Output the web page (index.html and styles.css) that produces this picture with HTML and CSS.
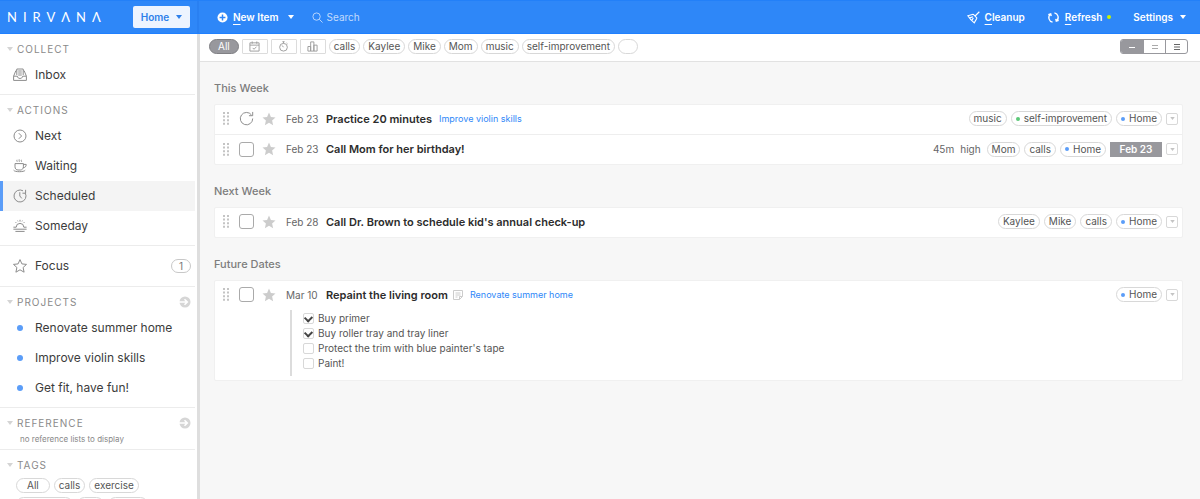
FILE: index.html
```
<!DOCTYPE html>
<html lang="en">
<head>
    <meta charset="UTF-8">
    <meta name="viewport" content="width=device-width, initial-scale=1.0">
    <title>Nirvana</title>
    <link rel="stylesheet" href="styles.css">
</head>
<body>
    <!-- Shared icons -->
    <svg class="sprite" aria-hidden="true">
        <symbol id="caret" viewBox="0 0 6 4"><path d="M0 0h6L3 4z"/></symbol>
        <symbol id="star" viewBox="0 0 14 14"><path d="M7 .6l1.900 4.300 4.600.5-3.400 3.100 1 4.700L7 10.800l-4.100 2.400 1-4.700L.5 5.400l4.600-.5z"/></symbol>
        <symbol id="handle" viewBox="0 0 6 13"><path d="M0 0h2v2H0zM4 0h2v2H4zM0 3.600h2v2H0zM4 3.600h2v2H4zM0 7.200h2v2H0zM4 7.200h2v2H4zM0 10.800h2v2H0zM4 10.800h2v2H4z"/></symbol>
        <symbol id="go" viewBox="0 0 12 12"><circle cx="6" cy="6" r="5.500" fill="#d6d6d6" stroke="none"/><path d="M0 6h8M5.500 3.200L8.300 6 5.500 8.800" stroke="#fff" stroke-width="1.600"/></symbol>
    </svg>

    <header class="topbar">
        <div class="brand">
            <a class="logo" href="#" aria-label="Nirvana">NIRVΛNΛ</a>
            <button class="area">Home <svg class="caret"><use href="#caret"/></svg></button>
        </div>
        <nav class="tools">
            <button class="tool">
                <svg class="icon-plus" viewBox="0 0 12 12"><circle cx="6" cy="6" r="5.500" fill="#fff"/><path d="M6 2.800v6.400M2.800 6h6.400" stroke="#2e86f8" stroke-width="1.600"/></svg>
                <span><u>N</u>ew Item</span>
                <svg class="caret"><use href="#caret"/></svg>
            </button>
            <label class="search">
                <svg viewBox="0 0 12 12"><circle cx="5" cy="5" r="4"/><path d="M8 8l3.500 3.500"/></svg>
                <input type="text" placeholder="Search" aria-label="Search">
            </label>
            <button class="tool cleanup">
                <svg viewBox="0 0 14 14"><path d="M13.300.8L9 5.100M6.600 3.400l4.200 4.200M6.600 3.400L.9 5.200c1.600 2.600 3.600 5 6.900 7.600l3-5.200M3 7.400l3.400-1.200M5.200 10.200l1.600-2.800" stroke-width="1.200"/></svg>
                <span><u>C</u>leanup</span>
            </button>
            <button class="tool refresh">
                <svg viewBox="0 0 12 14"><path d="M5 12A5 5 0 0 1 2.600 3.400M7 2a5 5 0 0 1 2.400 8.600M.4 3.800l2.600-.8.6 2.600M11.600 10.200l-2.600.8-.6-2.600" stroke-width="1.400"/></svg>
                <span><u>R</u>efresh</span>
                <i class="status"></i>
            </button>
            <button class="tool settings">Settings <svg class="caret"><use href="#caret"/></svg></button>
        </nav>
    </header>

    <div class="layout">
        <aside class="sidebar">
            <section>
                <h2><svg class="caret"><use href="#caret"/></svg>COLLECT</h2>
                <a class="item" href="#">
                    <svg viewBox="0 0 14 14"><path d="M.6 8.200L2.800 2.800h1M13.400 8.200l-2.200-5.400h-1M.6 8.200v4.200h12.800V8.200H9.600c0 3-5.200 3-5.200 0zM3.800 7V1h6.400v6M5.200 3h3.600M5.200 5h3.600M5.200 7h3.600"/></svg>Inbox
                </a>
            </section>
            <section>
                <h2><svg class="caret"><use href="#caret"/></svg>ACTIONS</h2>
                <a class="item" href="#">
                    <svg viewBox="0 0 14 14"><circle cx="7" cy="7" r="6"/><path d="M5.800 4.200L8.600 7 5.800 9.800"/></svg>Next
                </a>
                <a class="item" href="#">
                    <svg viewBox="0 0 14 14"><path d="M2 4.600h8.400v3.200c0 2-1.400 3.200-3 3.200H5c-1.600 0-3-1.200-3-3.200zM10.400 5.400h2.800c0 2.200-1 3.200-3 3.200M.6 11.200c1 2 10.600 2 11.600 0M4 .8c-.6.8.6 1.200 0 2M6.200.4c-.6 1 .6 1.400 0 2.400M8.400.8c-.6.8.6 1.200 0 2"/></svg>Waiting
                </a>
                <a class="item selected" href="#">
                    <svg viewBox="0 0 14 14"><path d="M10 1.800A6 6 0 1 0 12.200 4M12.600.8v3.400H9.400M6.800 3.200V7l2 2.400"/></svg>Scheduled
                </a>
                <a class="item" href="#">
                    <svg viewBox="0 0 14 14"><path d="M.4 10.200h13.200M2.400 12.400h9.200M.4 8.200h2.800a3.800 3.800 0 0 1 7.600 0h2.800M7 .8v1.800M2.600 3.200l.8.8M11.400 3.200l-.8.8M4.600 1.600l.4.8M9.400 1.600L9 2.400"/></svg>Someday
                </a>
            </section>
            <section class="focus">
                <a class="item" href="#"><svg><use href="#star"/></svg>Focus <span class="count">1</span></a>
            </section>
            <section>
                <h2><svg class="caret"><use href="#caret"/></svg>PROJECTS <svg class="go"><use href="#go"/></svg></h2>
                <a class="item" href="#"><i class="dot"></i>Renovate summer home</a>
                <a class="item" href="#"><i class="dot"></i>Improve violin skills</a>
                <a class="item" href="#"><i class="dot"></i>Get fit, have fun!</a>
            </section>
            <section>
                <h2><svg class="caret"><use href="#caret"/></svg>REFERENCE <svg class="go"><use href="#go"/></svg></h2>
                <p class="empty">no reference lists to display</p>
            </section>
            <section>
                <h2><svg class="caret"><use href="#caret"/></svg>TAGS</h2>
                <div class="tags">
                    <button class="pill wide">All</button>
                    <button class="pill">calls</button>
                    <button class="pill">exercise</button>
                    <button class="pill blank-lg" aria-label="tag"></button>
                    <button class="pill blank-sm" aria-label="tag"></button>
                    <button class="pill blank-md" aria-label="tag"></button>
                </div>
            </section>
        </aside>

        <main>
            <div class="filters">
                <button class="pill all">All</button>
                <button class="filter-icon" aria-label="Due">
                    <svg viewBox="0 0 12 12"><path d="M1 2h10v9H1zM1 4.500h10M3.500.5V3M8.500.5V3M4 7.500l1.500 1.500L8.200 6.200"/></svg>
                </button>
                <button class="filter-icon" aria-label="Time">
                    <svg viewBox="0 0 12 12"><circle cx="6" cy="6.800" r="4.200"/><path d="M6 6.800L4.400 4.800M4.800.8h2.400M6 .8v1.800M9.400 2.200l1 1"/></svg>
                </button>
                <button class="filter-icon" aria-label="Energy">
                    <svg viewBox="0 0 12 12"><path d="M1 6h3v5H1zM4 1h3.500v10H4zM7.500 4.500H11V11H7.500z"/></svg>
                </button>
                <button class="pill">calls</button>
                <button class="pill">Kaylee</button>
                <button class="pill">Mike</button>
                <button class="pill">Mom</button>
                <button class="pill">music</button>
                <button class="pill">self-improvement</button>
                <button class="pill blank" aria-label="No tag"></button>
                <div class="views">
                    <button class="active" aria-label="Compact"><svg viewBox="0 0 6 8"><path d="M0 4.500h6"/></svg></button>
                    <button aria-label="Normal"><svg viewBox="0 0 6 8"><path d="M0 2.500h6M0 5.500h6"/></svg></button>
                    <button aria-label="Expanded"><svg class="dark" viewBox="0 0 6 8"><path d="M0 1.500h6M0 4h6M0 6.500h6"/></svg></button>
                </div>
            </div>

            <div class="content">
                <h3>This Week</h3>
                <ul class="card">
                    <li>
                        <div class="task">
                            <svg class="handle"><use href="#handle"/></svg>
                            <button class="repeat" aria-label="Repeat"><svg viewBox="0 0 16 16"><path d="M13.300 4.200A6.600 6.600 0 1 0 14.600 8M14.600 1v4h-4"/></svg></button>
                            <button class="star" aria-label="Focus"><svg><use href="#star"/></svg></button>
                            <span class="date">Feb 23</span>
                            <span class="title">Practice 20 minutes</span>
                            <a class="project" href="#">Improve violin skills</a>
                            <div class="meta">
                                <span class="pill">music</span>
                                <span class="pill"><i class="green"></i>self-improvement</span>
                                <span class="pill"><i></i>Home</span>
                            </div>
                            <button class="more" aria-label="More"><svg><use href="#caret"/></svg></button>
                        </div>
                    </li>
                    <li>
                        <div class="task">
                            <svg class="handle"><use href="#handle"/></svg>
                            <input class="check" type="checkbox" aria-label="Call Mom for her birthday!">
                            <button class="star" aria-label="Focus"><svg><use href="#star"/></svg></button>
                            <span class="date">Feb 23</span>
                            <span class="title">Call Mom for her birthday!</span>
                            <div class="meta">
                                <span class="effort">45m</span>
                                <span class="effort">high</span>
                                <span class="pill">Mom</span>
                                <span class="pill">calls</span>
                                <span class="pill"><i></i>Home</span>
                                <span class="due">Feb 23</span>
                            </div>
                            <button class="more" aria-label="More"><svg><use href="#caret"/></svg></button>
                        </div>
                    </li>
                </ul>

                <h3>Next Week</h3>
                <ul class="card">
                    <li>
                        <div class="task">
                            <svg class="handle"><use href="#handle"/></svg>
                            <input class="check" type="checkbox" aria-label="Call Dr. Brown to schedule kid's annual check-up">
                            <button class="star" aria-label="Focus"><svg><use href="#star"/></svg></button>
                            <span class="date">Feb 28</span>
                            <span class="title">Call Dr. Brown to schedule kid's annual check-up</span>
                            <div class="meta">
                                <span class="pill">Kaylee</span>
                                <span class="pill">Mike</span>
                                <span class="pill">calls</span>
                                <span class="pill"><i></i>Home</span>
                            </div>
                            <button class="more" aria-label="More"><svg><use href="#caret"/></svg></button>
                        </div>
                    </li>
                </ul>

                <h3>Future Dates</h3>
                <ul class="card">
                    <li>
                        <div class="task">
                            <svg class="handle"><use href="#handle"/></svg>
                            <input class="check" type="checkbox" aria-label="Repaint the living room">
                            <button class="star" aria-label="Focus"><svg><use href="#star"/></svg></button>
                            <span class="date">Mar 10</span>
                            <span class="title">Repaint the living room</span>
                            <svg class="note" viewBox="0 0 10 10"><path d="M.5.5h9v6l-3 3h-6zM9.500 6.500h-3v3M2.500 3h5M2.500 5h5M2.500 7h2"/></svg>
                            <a class="project" href="#">Renovate summer home</a>
                            <div class="meta">
                                <span class="pill"><i></i>Home</span>
                            </div>
                            <button class="more" aria-label="More"><svg><use href="#caret"/></svg></button>
                        </div>
                        <div class="checklist">
                            <label><input type="checkbox" checked>Buy primer</label>
                            <label><input type="checkbox" checked>Buy roller tray and tray liner</label>
                            <label><input type="checkbox">Protect the trim with blue painter's tape</label>
                            <label><input type="checkbox">Paint!</label>
                        </div>
                    </li>
                </ul>
            </div>
        </main>
    </div>
</body>
</html>
```

FILE: styles.css
```
* {
    box-sizing: border-box;
}
body {
    display: flex;
    flex-direction: column;
    height: 100vh;
    margin: 0;
    overflow: hidden;
    background-color: #f7f7f7;
    color: #3c3c3c;
    font-family: Inter, "Open Sans", sans-serif;
    font-size: 10px;
    line-height: 14px;
}
button, input {
    margin: 0;
    padding: 0;
    border: none;
    background: none;
    color: inherit;
    font: inherit;
}
button {
    cursor: pointer;
}
a {
    color: inherit;
    text-decoration: none;
}
svg {
    flex: none;
    fill: none;
    stroke: currentColor;
}
.sprite {
    display: none;
}
.caret {
    width: 6px;
    height: 4px;
    fill: currentColor;
    stroke: none;
}

/* Top bar */
.topbar {
    display: flex;
    flex: none;
    height: 34px;
    border-top: 1px solid #2380f8;
    border-bottom: 1px solid #1f80ff;
    background-color: #2e87f8;
    color: #fff;
    font-weight: 600;
}
.brand {
    display: flex;
    align-items: center;
    justify-content: space-between;
    flex: none;
    width: 199px;
    padding: 0 7px;
    border-right: 2px solid #2980f2;
}
.logo {
    font-family: Lato, sans-serif;
    font-size: 13px;
    font-weight: normal;
    letter-spacing: 6px;
}
.area {
    display: flex;
    align-items: center;
    justify-content: center;
    gap: 7px;
    width: 57px;
    height: 22px;
    border-radius: 2px;
    background-color: #edf4ff;
    color: #2e80ea;
}
.tools {
    display: flex;
    align-items: center;
    flex: 1;
    padding: 0 14px 0 18px;
}
.tool {
    display: flex;
    align-items: center;
    gap: 5px;
}
.tool u {
    text-underline-offset: 3px;
}
.tool svg {
    width: 13px;
    height: 13px;
}
.tool .icon-plus {
    width: 11px;
    height: 11px;
    stroke: none;
}
.tool .caret {
    width: 6px;
    height: 4px;
    margin-left: 4px;
}
.search {
    display: flex;
    align-items: center;
    flex: 1;
    gap: 4px;
    margin-left: 18px;
    color: #c2dbfd;
    font-weight: normal;
}
.search svg {
    width: 11px;
    height: 11px;
}
.search input::placeholder {
    color: #c2dbfd;
}
.refresh {
    margin-left: 22px;
}
.settings {
    gap: 3px;
    margin-left: 22px;
}
.status {
    width: 4px;
    height: 4px;
    border-radius: 50%;
    background-color: #c8f400;
}

/* Sidebar */
.layout {
    display: flex;
    flex: 1;
    min-height: 0;
}
.sidebar {
    flex: none;
    width: 200px;
    overflow: hidden;
    border-right: 3px solid #dedede;
    background-color: #fff;
}
.sidebar section {
    margin-right: 2px;
    padding-bottom: 4px;
    border-bottom: 1px solid #ececec;
}
.sidebar h2 {
    display: flex;
    align-items: center;
    height: 26px;
    margin: 0;
    padding: 3px 4px 0 7px;
    color: #8a8a8a;
    font-size: 10px;
    font-weight: normal;
    letter-spacing: 1px;
}
.sidebar h2 .caret {
    margin-right: 4px;
    color: #d4d4d4;
}
.go {
    width: 12px;
    height: 12px;
    margin-left: auto;
}
.item {
    display: flex;
    align-items: center;
    height: 30px;
    padding: 0 4px 0 13px;
    font-size: 12px;
}
.item svg {
    width: 14px;
    height: 14px;
    margin-right: 8px;
    color: #8c8c8c;
}
.item.selected {
    padding-left: 10px;
    border-left: 3px solid #5b9df8;
    background-color: #f4f4f4;
}
.sidebar .focus {
    padding-top: 5px;
    padding-bottom: 5px;
}
.count {
    width: 20px;
    margin-left: auto;
    border: 1px solid #c8c8c8;
    border-radius: 8px;
    color: #777;
    font-size: 10px;
    line-height: 12px;
    text-align: center;
}
.dot {
    width: 6px;
    height: 6px;
    margin: 0 12px 0 4px;
    border-radius: 50%;
    background-color: #5b9df8;
}
.empty {
    margin: 0;
    padding-left: 20px;
    color: #888;
    font-size: 8px;
    line-height: 11px;
}
.tags {
    display: flex;
    flex-wrap: wrap;
    gap: 4px;
    padding: 2px 16px;
}

/* Pills */
.pill {
    display: flex;
    align-items: center;
    height: 15px;
    padding: 0 4px;
    border: 1px solid #d8d8d8;
    border-radius: 8px;
    background-color: #fff;
    color: #555;
    font-size: 10px;
    line-height: 13px;
    white-space: nowrap;
}
.pill i {
    width: 4px;
    height: 4px;
    margin-right: 4px;
    border-radius: 50%;
    background-color: #5b9df8;
}
.pill .green {
    background-color: #5cc878;
}
.pill.wide {
    padding: 0 10px;
}
.pill.blank {
    width: 20px;
}
.pill.blank-lg {
    width: 57px;
}
.pill.blank-sm {
    width: 27px;
}
.pill.blank-md {
    width: 40px;
}
.pill.all {
    padding: 0 8px;
    border-color: #808084;
    background-color: #98989d;
    color: #fff;
}

/* Filter bar */
main {
    flex: 1;
    min-width: 0;
}
.filters {
    display: flex;
    align-items: center;
    gap: 3px;
    height: 28px;
    padding: 0 12px 2px 9px;
    border-bottom: 1px solid #e2e2e2;
    background-color: #fff;
}
.filter-icon {
    display: flex;
    align-items: center;
    justify-content: center;
    width: 26px;
    height: 15px;
    border: 1px solid #dcdcdc;
    border-radius: 1px;
    color: #999;
}
.filter-icon svg {
    width: 11px;
    height: 11px;
}
.views {
    display: flex;
    margin-left: auto;
    overflow: hidden;
    border: 1px solid #98989d;
    border-radius: 3px;
}
.views button {
    display: flex;
    align-items: center;
    justify-content: center;
    width: 22px;
    height: 13px;
    color: #aaa;
}
.views button + button {
    border-left: 1px solid #98989d;
}
.views svg {
    width: 6px;
    height: 8px;
}
.views .dark {
    color: #666;
}
.views .active {
    background-color: #98989d;
    color: #fff;
}

/* Task lists */
.content {
    padding: 0 17px 0 14px;
}
.content h3 {
    margin: 0;
    padding: 19px 0 9px;
    color: #7d7d7d;
    font-size: 11px;
    font-weight: 500;
}
.card {
    margin: 0;
    padding: 0;
    border: 1px solid #f0f0f0;
    border-radius: 2px;
    background-color: #fff;
    list-style: none;
}
.card li + li {
    border-top: 1px solid #eee;
}
.task {
    display: flex;
    align-items: center;
    height: 29px;
    padding: 0 4px 2px 8px;
}
li + li .task {
    padding-bottom: 1px;
}
.handle {
    width: 6px;
    height: 13px;
    margin-right: 10px;
    fill: #c4c4c4;
    stroke: none;
}
.repeat {
    display: flex;
    color: #888;
}
.repeat svg {
    width: 15px;
    height: 15px;
}
.check {
    width: 15px;
    height: 15px;
    border: 1px solid #aaa;
    border-radius: 3px;
    appearance: none;
}
.star {
    display: flex;
    margin: 0 10px 0 8px;
}
.star svg {
    width: 14px;
    height: 14px;
    fill: #ccc;
    stroke: none;
}
.date {
    width: 40px;
    color: #666;
    font-size: 10px;
}
.title {
    color: #2c2c2c;
    font-size: 11px;
    font-weight: 600;
}
.project {
    margin-left: 7px;
    color: #2e87f8;
    font-size: 9px;
}
.note {
    width: 10px;
    height: 10px;
    margin-left: 5px;
    color: #ccc;
}
.meta {
    display: flex;
    align-items: center;
    gap: 4px;
    margin-left: auto;
}
.effort {
    margin-right: 2px;
    color: #666;
    font-size: 10px;
}
.due {
    width: 52px;
    background-color: #98989d;
    color: #fff;
    font-weight: 600;
    line-height: 15px;
    text-align: center;
}
.more {
    display: flex;
    align-items: center;
    justify-content: center;
    width: 12px;
    height: 12px;
    margin-left: 4px;
    border: 1px solid #d8d8d8;
    border-radius: 2px;
}
.more svg {
    width: 5px;
    height: 3px;
    fill: #c4c4c4;
    stroke: none;
}
.checklist {
    display: flex;
    flex-direction: column;
    gap: 1px;
    margin: 0 0 4px 75px;
    padding: 1px 0 6px 11px;
    border-left: 2px solid #dcdcdc;
}
.checklist label {
    display: flex;
    align-items: center;
    gap: 4px;
    color: #555;
    font-size: 10px;
}
.checklist input {
    display: flex;
    width: 11px;
    height: 11px;
    border: 1px solid #d8d8d8;
    border-radius: 2px;
    appearance: none;
}
.checklist input:checked::before {
    width: 7px;
    height: 4px;
    margin: 1px;
    border-bottom: 2px solid #444;
    border-left: 2px solid #444;
    content: "";
    transform: rotate(-45deg);
}
```
